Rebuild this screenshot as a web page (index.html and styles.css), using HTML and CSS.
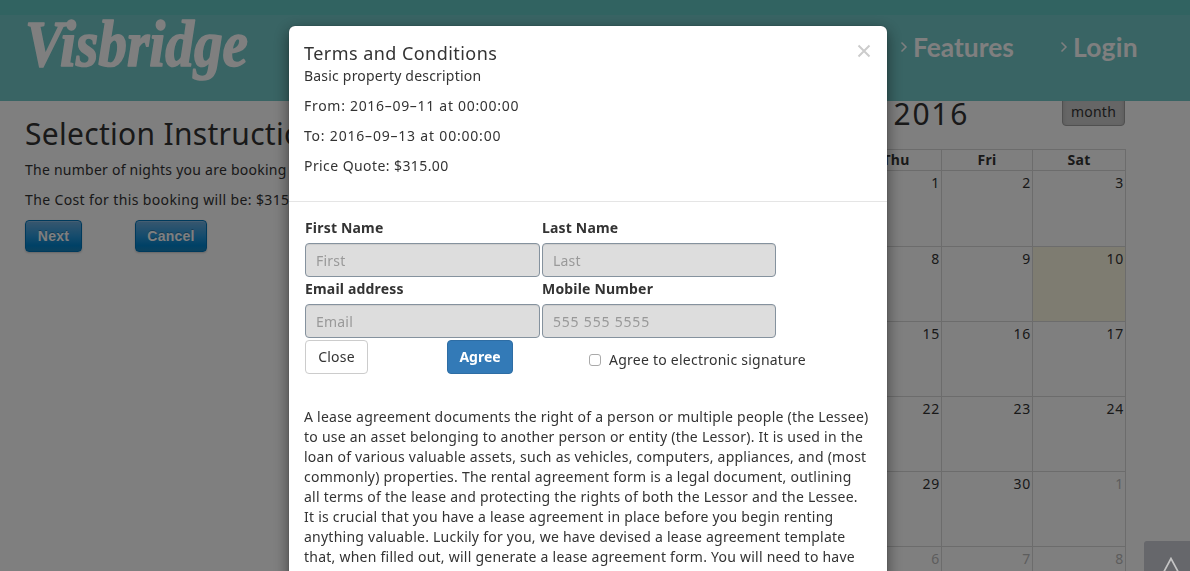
FILE: index.html
```
<!DOCTYPE html>
<html lang="en">
<head>
<meta charset="utf-8">
<title>Visbridge</title>
<link rel="stylesheet" href="styles.css">
</head>
<body>
<header class="site-header">
  <svg class="logo" width="240" height="70" viewBox="0 0 240 70" aria-label="Visbridge">
    <text class="logo-text" x="5" y="50" textLength="223" lengthAdjust="spacingAndGlyphs">Visbridge</text>
  </svg>
  <nav class="nav">
    <a class="nav-link"><svg class="chevron" width="8" height="12" viewBox="0 0 8 12"><path d="M1.5 1.5 6 6 1.5 10.5"/></svg><span>Features</span></a>
    <a class="nav-link login"><svg class="chevron" width="8" height="12" viewBox="0 0 8 12"><path d="M1.5 1.5 6 6 1.5 10.5"/></svg><span>Login</span></a>
  </nav>
</header>
<main class="page">
  <section class="selection">
    <h2 class="selection-title">Selection Instructions</h2>
    <p class="line">The number of nights you are booking</p>
    <p class="line cost">The Cost for this booking will be: $315</p>
    <div class="actions">
      <button class="btn-blue next">Next</button>
      <button class="btn-blue cancel">Cancel</button>
    </div>
  </section>
  <section class="calendar">
    <div class="toolbar">
      <h2 class="month-title">2016</h2>
      <button class="month-btn">month</button>
    </div>
    <table class="days">
      <thead><tr><th>Thu</th><th>Fri</th><th>Sat</th></tr></thead>
      <tbody>
        <tr><td>1</td><td>2</td><td>3</td></tr>
        <tr><td>8</td><td>9</td><td class="today">10</td></tr>
        <tr><td>15</td><td>16</td><td>17</td></tr>
        <tr><td>22</td><td>23</td><td>24</td></tr>
        <tr><td>29</td><td>30</td><td class="other">1</td></tr>
        <tr><td class="other">6</td><td class="other">7</td><td class="other">8</td></tr>
      </tbody>
    </table>
  </section>
</main>
<div class="backdrop"></div>
<div class="to-top"><svg width="20" height="26" viewBox="0 0 20 26"><path d="M10 1.5-1 22H21Z"/></svg></div>
<div class="modal">
  <div class="modal-header">
    <div class="modal-intro">
      <h4 class="modal-title">Terms and Conditions</h4>
      <p class="desc">Basic property description</p>
      <p class="date">From: 2016–09–11 at 00:00:00</p>
      <p class="date">To: 2016–09–13 at 00:00:00</p>
      <p class="date quote">Price Quote: $315.00</p>
    </div>
    <svg class="close-x" width="14" height="14" viewBox="0 0 14 14"><path d="M1.5 1.5 12.5 12.5M12.5 1.5 1.5 12.5"/></svg>
  </div>
  <div class="modal-body">
    <div class="fields">
      <label class="field"><span class="label">First Name</span><input class="input" placeholder="First"></label>
      <label class="field"><span class="label">Last Name</span><input class="input" placeholder="Last"></label>
      <label class="field"><span class="label">Email address</span><input class="input" placeholder="Email"></label>
      <label class="field"><span class="label">Mobile Number</span><input class="input phone" placeholder="555 555 5555"></label>
    </div>
    <div class="controls">
      <button class="btn btn-close">Close</button>
      <button class="btn btn-agree">Agree</button>
      <label class="sign"><input class="check" type="checkbox"><span>Agree to electronic signature</span></label>
    </div>
    <p class="terms">A lease agreement documents the right of a person or multiple people (the Lessee)<br>to use an asset belonging to another person or entity (the Lessor). It is used in the<br>loan of various valuable assets, such as vehicles, computers, appliances, and (most<br>commonly) properties. The rental agreement form is a legal document, outlining<br>all terms of the lease and protecting the rights of both the Lessor and the Lessee.<br>It is crucial that you have a lease agreement in place before you begin renting<br>anything valuable. Luckily for you, we have devised a lease agreement template<br>that, when filled out, will generate a lease agreement form. You will need to have<br>a copy of our terms already on hand to successfully fill out the template.</p>
  </div>
</div>
</body>
</html>
```
FILE: styles.css
```
* { box-sizing: border-box; }
html, body { height: 100%; overflow: hidden; }
body {
  margin: 0;
  background: #fff;
  color: #333;
  font: 14px/20px "Noto Sans", sans-serif;
  letter-spacing: .24px;
  display: flex;
  flex-direction: column;
}
h2, h4, p { margin: 0; font-weight: 400; white-space: nowrap; }
button { font-family: inherit; letter-spacing: inherit; }

.site-header {
  flex: none;
  height: 101px;
  padding: 16px 52px 0 20px;
  display: flex;
  justify-content: space-between;
  background: linear-gradient(#62c6c2 15px, #72c8c8 15px);
}
.logo { flex: none; overflow: visible; }
.logo-text {
  font: italic bold 66px "Liberation Serif", serif;
  letter-spacing: 0;
  fill: #fff;
  stroke: #fff;
  stroke-width: 1.6;
  stroke-linejoin: round;
}
.nav {
  display: flex;
  padding-top: 14px;
  gap: 46px;
  color: #fff;
  font: bold 26.4px/36px Lato, sans-serif;
  letter-spacing: 0;
}
.nav-link { display: flex; gap: 5px; }
.nav-link span { margin-top: -1px; }
.login span { letter-spacing: .3px; }
.chevron { margin-top: 11px; }
.chevron path { fill: none; stroke: #fff; stroke-width: 1.5; }

.page {
  flex: 1;
  min-height: 0;
  overflow: hidden;
  display: flex;
  justify-content: space-between;
  padding: 0 65px 0 25px;
}
.selection { width: 400px; padding-top: 15px; }
.selection-title { font-size: 30px; line-height: 36px; letter-spacing: .3px; margin-bottom: 8px; }
.line { margin-bottom: 10px; }
.cost { letter-spacing: .37px; }
.actions { display: flex; gap: 53px; }
.btn-blue {
  height: 32px;
  padding: 0;
  border: 1px solid #0074b8;
  border-radius: 4px;
  background: linear-gradient(#70aede, #2a98da 50%, #0082cc 82%, #1682bc);
  box-shadow: inset 0 1px 0 rgba(255,255,255,.2), 0 1px 2px rgba(0,0,0,.2);
  color: #fff;
  font: bold 14px/20px "Liberation Sans", sans-serif;
  text-shadow: 0 -1px 0 rgba(0,0,0,.25);
}
.next { width: 57px; }
.cancel { width: 72px; }

.calendar { width: 275px; }
.toolbar { height: 48px; display: flex; justify-content: space-between; }
.month-title {
  width: 119px;
  display: flex;
  justify-content: flex-end;
  font-size: 30px;
  line-height: 36px;
  letter-spacing: 1.7px;
  margin-top: -5px;
}
.month-btn {
  width: 63px;
  height: 31px;
  margin-top: -6px;
  padding: 1px 0 0;
  border: 1px solid #a0a0a0;
  border-radius: 4px;
  background: #ccc;
  box-shadow: inset 0 2px 4px rgba(0,0,0,.15);
  color: #333;
  font-size: 14px;
}
.days { width: 275px; border-collapse: collapse; table-layout: fixed; }
.days th { width: 91px; height: 21px; padding: 0; line-height: 18px; }
.days th, .days td { border: 1px solid #d8d8d8; }
.days th:last-child { width: 93px; }
.days td { height: 75px; padding: 2px 1px 0; vertical-align: top; text-align: right; letter-spacing: .8px; }
.days tbody tr:first-child td { height: 76px; }
.days .today { background: #fcf8e3; }
.days .other { color: #bbb; }

.backdrop { position: fixed; inset: 0; background: rgba(0,0,0,.5); }
.to-top {
  position: fixed;
  right: 0;
  bottom: 0;
  width: 46px;
  height: 30px;
  padding: 16px 0 0 17px;
  overflow: hidden;
  border-radius: 3px 0 0;
  background: #66676b;
}
.to-top svg { overflow: visible; }
.to-top path { fill: none; stroke: #c4c4c4; stroke-width: 1.7; }

.modal {
  position: fixed;
  top: 26px;
  left: 289px;
  width: 598px;
  height: 620px;
  border-radius: 6px;
  background: #fff;
  box-shadow: 0 5px 15px rgba(0,0,0,.5), 0 0 1px rgba(0,0,0,.6);
}
.modal-header {
  height: 176px;
  padding: 15px 16px 0 15px;
  border-bottom: 1px solid #e5e5e5;
  display: flex;
  justify-content: space-between;
}
.modal-title { font-size: 18px; line-height: 25px; letter-spacing: .45px; }
.desc { letter-spacing: .2px; margin-bottom: 10px; }
.date { letter-spacing: .7px; margin-bottom: 10px; }
.date + .date { letter-spacing: .8px; }
.date + .quote { letter-spacing: .42px; }
.close-x { margin-top: 3px; }
.close-x path { fill: none; stroke: #ccc; stroke-width: 2; }

.modal-body { padding: 16px 15px 0; }
.fields {
  display: grid;
  grid-template-columns: 235px 234px;
  column-gap: 2px;
  padding-left: 1px;
}
.field { display: block; height: 61px; }
.label { display: block; height: 25px; font-weight: 700; letter-spacing: .18px; }
.input {
  display: block;
  width: 100%;
  height: 34px;
  padding: 0 10px;
  border: 1px solid #85929e;
  border-radius: 4px;
  background: #ddd;
  box-shadow: inset 0 1px 1px rgba(0,0,0,.075);
  font: 14px/20px "Noto Sans", sans-serif;
  letter-spacing: .2px;
}
.phone { letter-spacing: .8px; }
.input::placeholder { color: #999; }
.controls { display: flex; padding-left: 1px; height: 67px; }
.btn {
  height: 34px;
  padding: 0;
  border: 1px solid #ccc;
  border-radius: 4px;
  font-size: 14px;
  line-height: 20px;
}
.btn-close { width: 63px; background: #fff; color: #333; }
.btn-agree {
  width: 66px;
  margin-left: 79px;
  border-color: #2e6da4;
  background: #337ab7;
  color: #fff;
  font-weight: 700;
  letter-spacing: 0;
}
.sign { display: flex; gap: 8px; margin: 10px 0 0 76px; }
.check {
  appearance: none;
  width: 12px;
  height: 12px;
  margin: 4px 0 0;
  border: 1px solid #aaa;
  border-radius: 3px;
  background: #fff;
}
.terms { color: #333; }
```
